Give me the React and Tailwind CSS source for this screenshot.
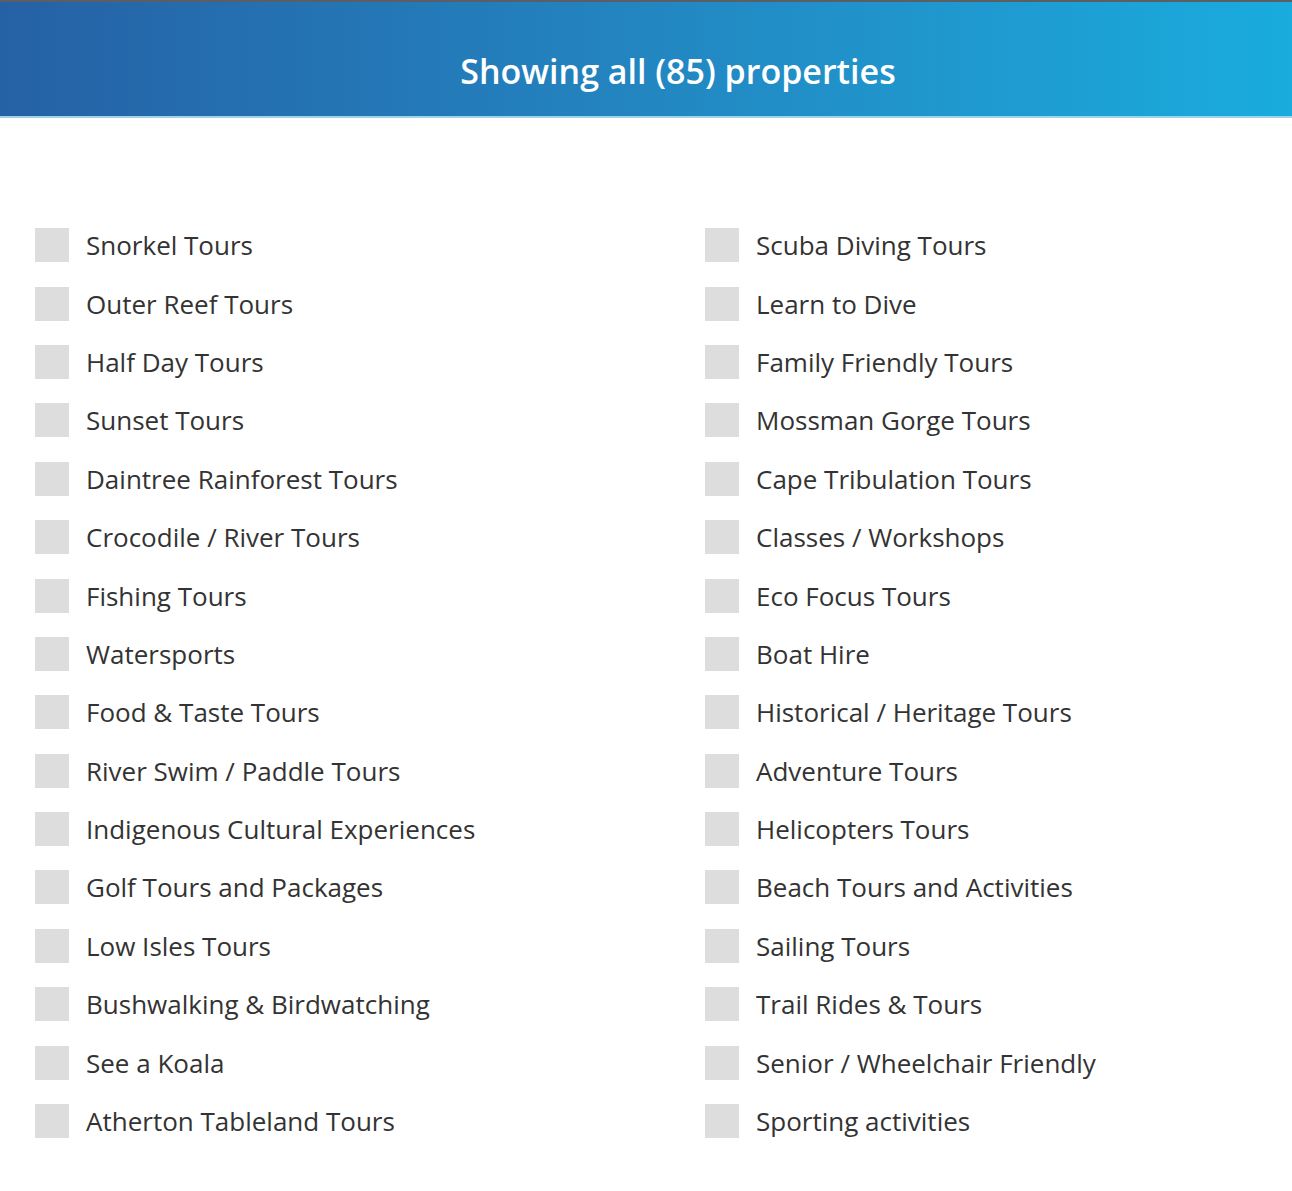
import React from 'react'

const left = [
  'Snorkel Tours',
  'Outer Reef Tours',
  'Half Day Tours',
  'Sunset Tours',
  'Daintree Rainforest Tours',
  'Crocodile / River Tours',
  'Fishing Tours',
  'Watersports',
  'Food & Taste Tours',
  'River Swim / Paddle Tours',
  'Indigenous Cultural Experiences',
  'Golf Tours and Packages',
  'Low Isles Tours',
  'Bushwalking & Birdwatching',
  'See a Koala',
  'Atherton Tableland Tours',
]

const right = [
  'Scuba Diving Tours',
  'Learn to Dive',
  'Family Friendly Tours',
  'Mossman Gorge Tours',
  'Cape Tribulation Tours',
  'Classes / Workshops',
  'Eco Focus Tours',
  'Boat Hire',
  'Historical / Heritage Tours',
  'Adventure Tours',
  'Helicopters Tours',
  'Beach Tours and Activities',
  'Sailing Tours',
  'Trail Rides & Tours',
  'Senior / Wheelchair Friendly',
  'Sporting activities',
]

function Item({ label }) {
  return (
    <label className="flex h-[58.4px] items-center cursor-pointer">
      <span className="h-[34px] w-[34px] shrink-0 bg-[#dddddd]" />
      <span className="ml-[17px] text-[26px] text-[#333333] leading-none">{label}</span>
    </label>
  )
}

export default function App() {
  return (
    <div className="min-h-screen bg-white font-['Open_Sans',sans-serif]">
      <div className="border-t-2 border-[#5a5f66] bg-gradient-to-r from-[#2561a5] to-[#19acdd] border-b-2 border-b-[#9fd3ea]">
        <h1 className="flex h-[114px] items-center justify-center pl-[64px] pt-[24px] text-[34px] font-semibold text-white">
          Showing all (85) properties
        </h1>
      </div>
      <div className="grid grid-cols-[670px_1fr] pl-[35px] pt-[98px]">
        <div>
          {left.map((l) => (
            <Item key={l} label={l} />
          ))}
        </div>
        <div>
          {right.map((l) => (
            <Item key={l} label={l} />
          ))}
        </div>
      </div>
    </div>
  )
}
